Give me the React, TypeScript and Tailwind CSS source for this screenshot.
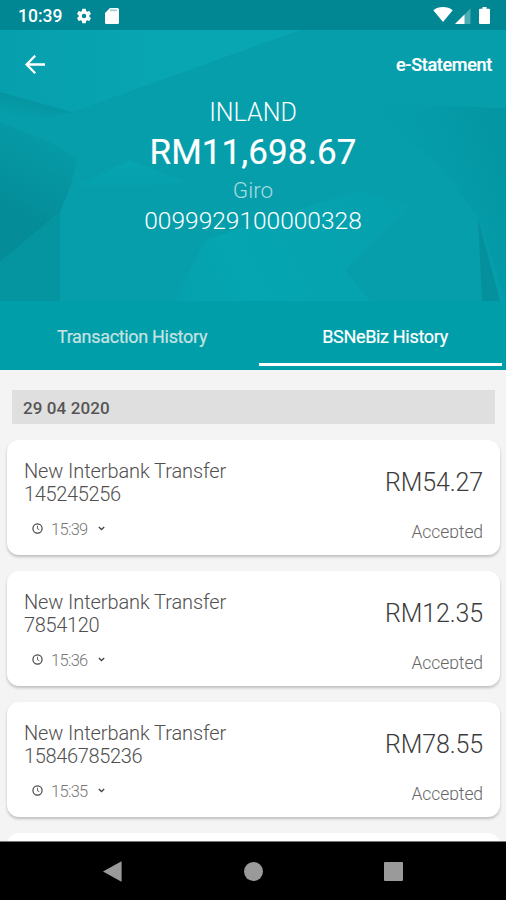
type Transaction = {
  title: string;
  reference: string;
  time: string;
  amount: string;
  status: string;
};

const transactions: Transaction[] = [
  { title: 'New Interbank Transfer', reference: '145245256', time: '15:39', amount: 'RM54.27', status: 'Accepted' },
  { title: 'New Interbank Transfer', reference: '7854120', time: '15:36', amount: 'RM12.35', status: 'Accepted' },
  { title: 'New Interbank Transfer', reference: '15846785236', time: '15:35', amount: 'RM78.55', status: 'Accepted' },
];

function StatusBar() {
  return (
    <div className="flex h-[30px] shrink-0 items-center bg-[#008793] pl-[18px] pr-[16px] text-white">
      <span className="mt-[3px] w-[45px] whitespace-nowrap text-[17.5px] font-medium leading-none">10:39</span>
      <svg className="ml-[12px] mt-px size-[18px]" viewBox="0 0 24 24" fill="currentColor">
        <path d="M19.14 12.94c.04-.3.06-.61.06-.94 0-.32-.02-.64-.07-.94l2.03-1.58a.49.49 0 0 0 .12-.61l-1.92-3.32a.49.49 0 0 0-.59-.22l-2.39.96c-.5-.38-1.03-.7-1.62-.94l-.36-2.54a.48.48 0 0 0-.48-.41h-3.84a.47.47 0 0 0-.47.41l-.36 2.54c-.59.24-1.13.57-1.62.94l-2.39-.96a.48.48 0 0 0-.59.22L2.74 8.87a.47.47 0 0 0 .12.61l2.03 1.58c-.05.3-.09.63-.09.94s.02.64.07.94l-2.03 1.58a.49.49 0 0 0-.12.61l1.92 3.32c.12.22.37.29.59.22l2.39-.96c.5.38 1.03.7 1.62.94l.36 2.54c.05.24.24.41.48.41h3.84c.24 0 .44-.17.47-.41l.36-2.54c.59-.24 1.13-.56 1.62-.94l2.39.96c.22.08.47 0 .59-.22l1.92-3.32a.47.47 0 0 0-.12-.61l-2.01-1.58zM12 15A3 3 0 1 1 12 9a3 3 0 0 1 0 6z" />
      </svg>
      <svg className="ml-[12px] mt-px h-[16px] w-[14px]" viewBox="0 0 14 16">
        <path d="M5 0h7.500Q14 0 14 1.500v13Q14 16 12.500 16h-11Q0 16 0 14.500V5z" fill="#fff" />
        <path d="M5 2.300h7" stroke="#7fc0c6" strokeWidth="1.800" opacity=".75" />
      </svg>
      <div className="ml-auto flex items-end">
        <svg className="mb-[2px] h-[15px] w-[20px]" viewBox="0 0 20 15" fill="#fff">
          <path d="M10 15 .3 3.200C3 1.100 6.300 0 10 0s7 1.100 9.700 3.200z" />
        </svg>
        <svg className="ml-[2px] h-[16px] w-[16px]" viewBox="0 0 16 16">
          <path d="M0 16 15.500.5V16z" fill="#fff" opacity=".3" />
          <path d="M0 16 9.500 6.500V16z" fill="#fff" />
        </svg>
        <svg className="ml-[8px] h-[17px] w-[11px]" viewBox="0 0 11 17" fill="#fff">
          <path d="M3.500 0h4v1.800H10q1 0 1 1V16q0 1-1 1H1q-1 0-1-1V2.800q0-1 1-1h2.500z" />
        </svg>
      </div>
    </div>
  );
}

function FacetedBackdrop() {
  return (
    <svg className="col-start-1 row-start-1 h-[271px] w-[506px]" viewBox="0 30 506 271" preserveAspectRatio="none">
      <defs>
        <linearGradient id="top" gradientUnits="userSpaceOnUse" x1="0" y1="60" x2="160" y2="60">
          <stop offset="0" stopColor="#069fad" />
          <stop offset="1" stopColor="#08a5b3" />
        </linearGradient>
        <linearGradient id="left" gradientUnits="userSpaceOnUse" x1="60" y1="120" x2="10" y2="215">
          <stop offset="0" stopColor="#069eab" />
          <stop offset=".45" stopColor="#0596a2" />
          <stop offset="1" stopColor="#048c98" />
        </linearGradient>
        <linearGradient id="glow" gradientUnits="userSpaceOnUse" x1="170" y1="300" x2="400" y2="190">
          <stop offset="0" stopColor="#05a0ad" />
          <stop offset=".3" stopColor="#05a5b2" />
          <stop offset="1" stopColor="#06a0ad" />
        </linearGradient>
        <linearGradient id="right" gradientUnits="userSpaceOnUse" x1="370" y1="170" x2="490" y2="130">
          <stop offset="0" stopColor="#069eab" stopOpacity="0" />
          <stop offset="1" stopColor="#0496a3" />
        </linearGradient>
        <linearGradient id="notch" gradientUnits="userSpaceOnUse" x1="34" y1="100" x2="30" y2="120">
          <stop offset="0" stopColor="#0595a1" />
          <stop offset="1" stopColor="#069eab" />
        </linearGradient>
        <linearGradient id="spark" gradientUnits="userSpaceOnUse" x1="140" y1="160" x2="140" y2="205">
          <stop offset="0" stopColor="#06a4b1" />
          <stop offset="1" stopColor="#069eab" />
        </linearGradient>
      </defs>
      <rect y="30" width="506" height="271" fill="#069eab" />
      <path d="M0 30H300L253 47 72 112 0 92z" fill="url(#top)" />
      <path d="M0 92 72 112 46 118 0 122z" fill="url(#notch)" />
      <path d="M0 122 46 140 78 158 70 188 60 212 0 262z" fill="url(#left)" />
      <path d="M0 262 60 212V301H0z" fill="#0495a1" />
      <path d="M130 160 185 182 150 186 78 186z" fill="url(#spark)" />
      <path d="M205 240 360 190 410 205 345 270 370 301H175z" fill="url(#glow)" />
      <path d="M358 104 506 108V301L478 218 440 165z" fill="url(#right)" />
      <path d="M478 218 482 301H500z" fill="#04909c" />
    </svg>
  );
}

function AccountHeader() {
  return (
    <header className="grid h-[271px] shrink-0 bg-[#069eab]">
      <FacetedBackdrop />
      <div className="z-10 col-start-1 row-start-1 flex flex-col text-white">
        <div className="flex h-[66px] items-center justify-between pl-[25px] pr-[14px] pt-[3px]">
          <svg className="size-[20px]" viewBox="0 0 20 20" fill="none" stroke="#fff" strokeWidth="2.300">
            <path d="M20 9.500H1.800M10.200.700 1.600 9.500l8.600 8.800" />
          </svg>
          <span className="text-[18px] font-medium leading-none tracking-[-0.300px] [-webkit-text-stroke:0.2px_white]">e-Statement</span>
        </div>
        <div className="flex flex-col items-center whitespace-nowrap pt-px">
          <div className="h-[34px] text-[25px] font-light leading-[31px]">INLAND</div>
          <div className="h-[44px] text-[35px] font-normal leading-[44px] tracking-[0.100px] [-webkit-text-stroke:0.2px_white]">RM11,698.67</div>
          <div className="h-[30px] text-[22.500px] font-light leading-[31px] text-[#a6dbe0]">Giro</div>
          <div className="h-[32px] text-[24.500px] font-light leading-[31px]">0099929100000328</div>
        </div>
      </div>
    </header>
  );
}

function Tabs() {
  return (
    <nav className="grid h-[69px] shrink-0 grid-cols-[259px_243px] bg-[#009ea9] text-[18px] leading-[72px] tracking-[-0.320px]">
      <div className="pl-[5px] text-center text-[#c8e2e3] [-webkit-text-stroke:0.2px_#c8e2e3]">Transaction History</div>
      <div className="flex flex-col pb-[4px] text-center text-white [-webkit-text-stroke:0.2px_white]">
        <span className="h-[62px] pl-[9px]">BSNeBiz History</span>
        <span className="h-[3px] bg-white" />
      </div>
    </nav>
  );
}

function TransactionCard({ item }: { item: Transaction }) {
  return (
    <article className="flex h-[115px] shrink-0 justify-between rounded-[12px] bg-white pl-[17px] pr-[17px] font-light text-[#505050] shadow-[0_2px_3px_rgba(0,0,0,0.22)]">
      <div className="flex flex-col pt-[20px]">
        <span className="text-[20px] leading-[23px] tracking-[-0.100px]">{item.title}</span>
        <span className="text-[20px] leading-[23px] tracking-[-0.350px]">{item.reference}</span>
        <div className="mt-[12px] flex h-[22px] items-center pl-[8px] text-[#777]">
          <svg className="mb-px size-[11px]" viewBox="0 0 12 12" fill="none" stroke="#444">
            <circle cx="6" cy="6" r="5" strokeWidth="1.300" />
            <path d="M6 3v3.300l2 1" strokeWidth=".9" />
          </svg>
          <span className="ml-[8px] w-[38px] pt-px text-[16.500px] leading-[22px] tracking-[-0.700px]">{item.time}</span>
          <svg className="mb-[2px] ml-[9px] h-[5px] w-[7px]" viewBox="0 0 7 5" fill="none" stroke="#444" strokeWidth="1.300">
            <path d="m.8 1 2.700 2.500L6.200 1" />
          </svg>
        </div>
      </div>
      <div className="flex flex-col items-end pt-[27px]">
        <span className="text-[25px] leading-[32px] tracking-[-0.150px] text-[#3c3c3c]">{item.amount}</span>
        <span className="mt-[21px] h-[18px] overflow-hidden text-[17.500px] leading-[24px] tracking-[-0.080px] text-[#666]">{item.status}</span>
      </div>
    </article>
  );
}

function NavigationBar() {
  return (
    <div className="flex h-[58px] shrink-0 items-center bg-black pl-[103px]">
      <svg className="h-[21px] w-[19px]" viewBox="0 0 19 21" fill="#9a9a9a">
        <path d="M0 10.500 18 .4q.6-.2.600.6v19q0 .8-.6.600z" />
      </svg>
      <span className="ml-[122px] size-[19px] rounded-full bg-[#9a9a9a]" />
      <span className="ml-[121px] size-[19px] rounded-[1px] bg-[#9a9a9a]" />
    </div>
  );
}

export default function App() {
  return (
    <div className="flex h-[900px] w-[506px] flex-col overflow-hidden bg-[#f4f4f4] font-['Roboto',sans-serif]">
      <StatusBar />
      <AccountHeader />
      <Tabs />
      <main className="flex h-[472px] shrink-0 flex-col overflow-hidden border-b border-[#777] pl-[7px] pr-[6px] pt-[20px]">
        <h2 className="mb-[16px] ml-[5px] h-[34px] w-[483px] shrink-0 bg-[#dfdfdf] pl-[11px] text-[17px] font-medium leading-[36px] tracking-[0.100px] text-[#555]">
          29 04 2020
        </h2>
        <div className="flex flex-col gap-[16px]">
          {transactions.map((item) => (
            <TransactionCard key={item.reference} item={item} />
          ))}
          <div className="h-[40px] shrink-0 rounded-[12px] bg-white" />
        </div>
      </main>
      <NavigationBar />
    </div>
  );
}
